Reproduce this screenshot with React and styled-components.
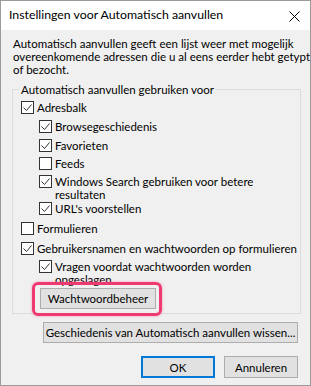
import React from 'react';
import styled, { createGlobalStyle } from 'styled-components';

const GlobalStyle = createGlobalStyle`
  html, body {
    margin: 0;
    padding: 0;
    background: #ffffff;
  }
  body {
    font-family: Lato, 'Noto Sans', sans-serif;
    font-size: 11.5px;
    color: #000;
  }
`;

const rows = [
  { label: 'Adresbalk', checked: true, level: 0, mt: 0 },
  { label: 'Browsegeschiedenis', checked: true, level: 1, mt: 6 },
  { label: 'Favorieten', checked: true, level: 1, mt: 6 },
  { label: 'Feeds', checked: false, level: 1, mt: 5 },
  { label: 'Windows Search gebruiken voor betere', extra: 'resultaten', checked: true, level: 1, mt: 5 },
  { label: "URL's voorstellen", checked: true, level: 1, mt: 1 },
  { label: 'Formulieren', checked: false, level: 0, mt: 7 },
  { label: 'Gebruikersnamen en wachtwoorden op formulieren', checked: true, level: 0, mt: 7 },
  { label: 'Vragen voordat wachtwoorden worden', extra: 'opgeslagen', checked: true, level: 1, mt: 5 },
];

const CheckBox = ({ checked }) => (
  <Box>
    {checked && (
      <svg width="11" height="11" viewBox="0 0 11 11">
        <path d="M1.5 5.5 L4.5 8.5 L9.5 2.5" fill="none" stroke="#333" strokeWidth="1" />
      </svg>
    )}
  </Box>
);

export default function App() {
  return (
    <>
      <GlobalStyle />
      <Window>
        <TitleBar>
          <Title>Instellingen voor Automatisch aanvullen</Title>
          <Close>
            <svg width="11" height="11" viewBox="0 0 11 11">
              <path d="M0.5 0.5 L10.5 10.5 M10.5 0.5 L0.5 10.5" stroke="#000" strokeWidth="1" />
            </svg>
          </Close>
        </TitleBar>
        <Body>
          <Description>
            Automatisch aanvullen geeft een lijst weer met mogelijk
            <br />
            overeenkomende adressen die u al eens eerder hebt getypt
            <br />
            of bezocht.
          </Description>
          <Group>
            <Legend>Automatisch aanvullen gebruiken voor</Legend>
            {rows.map(r => (
              <Row key={r.label} $level={r.level} $mt={r.mt}>
                <CheckBox checked={r.checked} />
                <Label>
                  {r.label}
                  {r.extra && (
                    <>
                      <br />
                      {r.extra}
                    </>
                  )}
                </Label>
              </Row>
            ))}
            <Highlight>
              <Button $w={116} $h={21}>Wachtwoordbeheer</Button>
            </Highlight>
          </Group>
          <ButtonRow $mt={8}>
            <Button $w={255} $h={21}>Geschiedenis van Automatisch aanvullen wissen...</Button>
          </ButtonRow>
          <ButtonRow $mt={13} $gap={9}>
            <Button $w={74} $h={22} $default>OK</Button>
            <Button $w={74} $h={22}>Annuleren</Button>
          </ButtonRow>
        </Body>
      </Window>
    </>
  );
}

const Window = styled.div`
  width: 311px;
  height: 386px;
  box-sizing: border-box;
  border: 1px solid #9a9a9a;
  display: flex;
  flex-direction: column;
  background: #f0f0f0;
  overflow: hidden;
`;

const TitleBar = styled.div`
  height: 29px;
  flex: none;
  background: #ffffff;
  display: flex;
  align-items: center;
  justify-content: space-between;
  padding: 0 10px 0 8px;
`;

const Title = styled.span`
  font-size: 12.3px;
  line-height: 16px;
  margin-top: -1px;
`;

const Close = styled.span`
  display: flex;
  width: 11px;
  height: 11px;
  margin-top: 1px;
`;

const Body = styled.div`
  flex: 1;
  padding: 0 9px 0 11px;
  display: flex;
  flex-direction: column;
`;

const Description = styled.p`
  margin: 7px 0 0 1px;
  line-height: 13px;
  white-space: nowrap;
`;

const Group = styled.fieldset`
  margin: 7px 0 0 0;
  padding: 5px 8px 4px 8px;
  border: 1px solid #dcdcdc;
  min-inline-size: 0;
  display: flex;
  flex-direction: column;
  align-items: flex-start;
`;

const Legend = styled.legend`
  padding: 0 2px;
  margin-left: -2px;
  line-height: 13px;
`;

const Row = styled.div`
  display: flex;
  align-items: flex-start;
  margin-left: ${p => p.$level * 18}px;
  margin-top: ${p => p.$mt}px;
`;

const Box = styled.span`
  flex: none;
  width: 13px;
  height: 13px;
  box-sizing: border-box;
  border: 1px solid #333333;
  background: #ffffff;
  margin-right: 3px;
  display: flex;
`;

const Label = styled.span`
  line-height: 13px;
  white-space: nowrap;
`;

const Highlight = styled.div`
  position: relative;
  margin: 2px 0 0 19px;
  display: flex;

  &::after {
    content: '';
    position: absolute;
    left: -8px;
    top: -6px;
    right: -6px;
    bottom: -7px;
    border: 3px solid #ee3a70;
    border-radius: 6px;
    box-shadow: 0 0 3px rgba(238, 58, 112, 0.45);
    pointer-events: none;
  }
`;

const ButtonRow = styled.div`
  display: flex;
  justify-content: flex-end;
  gap: ${p => p.$gap || 0}px;
  margin-top: ${p => p.$mt}px;
  padding-right: 3px;
`;

const Button = styled.div`
  width: ${p => p.$w}px;
  height: ${p => p.$h}px;
  box-sizing: border-box;
  flex: none;
  background: #e1e1e1;
  border: ${p => (p.$default ? '2px solid #0078d7' : '1px solid #adadad')};
  display: flex;
  align-items: center;
  justify-content: center;
  white-space: nowrap;
  line-height: 13px;
`;
